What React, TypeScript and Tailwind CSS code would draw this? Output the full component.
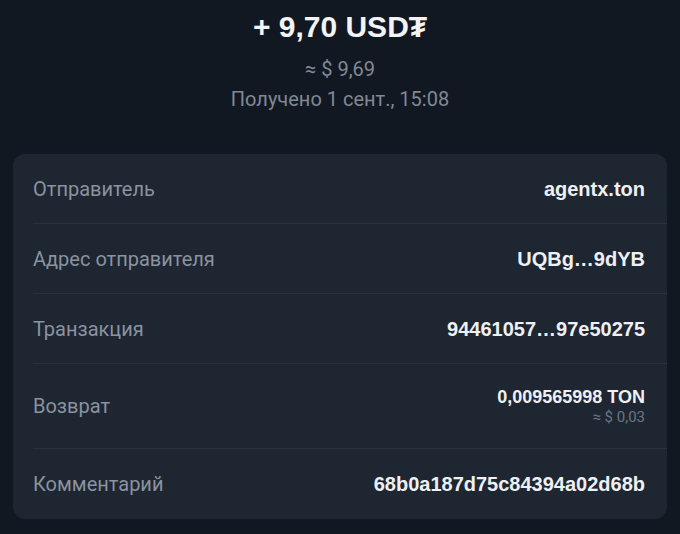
import React from 'react';

const rows = [
  { label: 'Отправитель', value: 'agentx.ton' },
  { label: 'Адрес отправителя', value: 'UQBg…9dYB' },
  { label: 'Транзакция', value: '94461057…97e50275' },
  { label: 'Возврат', value: '0,009565998 TON', sub: '≈ $ 0,03' },
  { label: 'Комментарий', value: '68b0a187d75c84394a02d68b' }
];

function App() {
  return (
    <div className="min-h-[534px] w-full bg-[#121821] font-['Roboto',sans-serif]">
      <div className="flex flex-col items-center pt-[9px]">
        <h1 className="text-[30px] leading-[35px] font-bold text-[#f2f4f6] font-['Liberation_Sans',sans-serif]">
          + 9,70 USD₮
        </h1>
        <div className="mt-[13px] text-[20px] leading-[24px] text-[#7f8995]">≈ $ 9,69</div>
        <div className="mt-[6px] text-[20px] leading-[24px] text-[#7f8995]">Получено 1 сент., 15:08</div>
      </div>

      <div className="mx-[13px] mt-[43px] rounded-[12px] bg-[#1e2632]">
        {rows.map((row, i) => (
          <div key={row.label} className="pl-[20px]">
            <div
              className={
                'flex items-center justify-between pr-[22px] ' +
                (row.sub ? 'h-[85px] ' : 'h-[70px] ') +
                (i < rows.length - 1 ? 'border-b border-[#29313d]' : '')
              }
            >
              <span className="text-[20px] text-[#8a939f]">{row.label}</span>
              <div className="flex flex-col items-end">
                <span
                  className={
                    'font-bold text-[#eef0f3] font-[\'Liberation_Sans\',sans-serif] ' +
                    (row.sub ? 'text-[18px] leading-[22px]' : 'text-[20px]')
                  }
                >
                  {row.value}
                </span>
                {row.sub && (
                  <span className="text-[15px] leading-[18px] text-[#6b7582]">{row.sub}</span>
                )}
              </div>
            </div>
          </div>
        ))}
      </div>
    </div>
  );
}

export default App;
